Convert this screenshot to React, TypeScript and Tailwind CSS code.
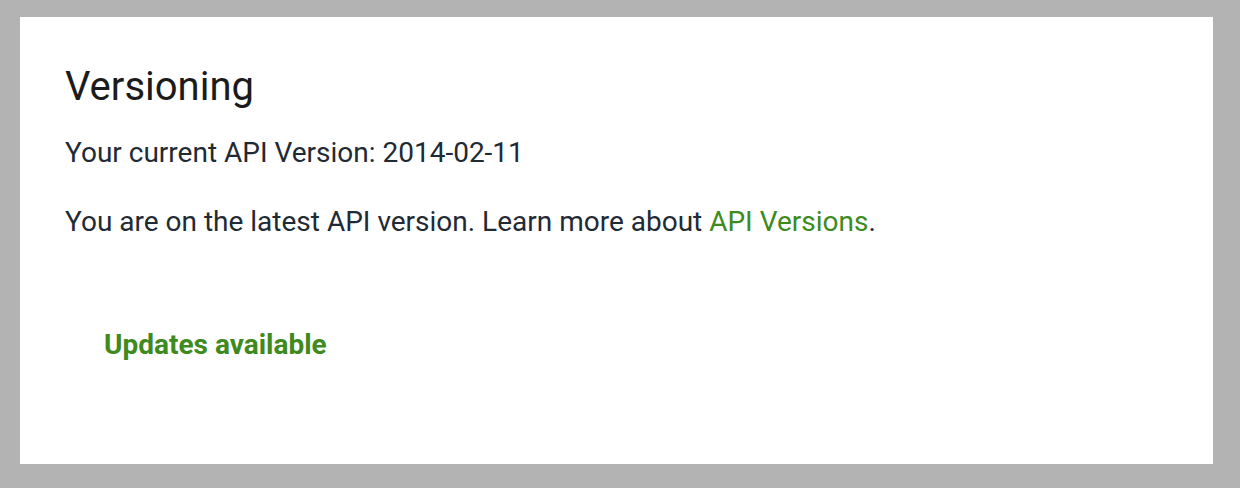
export default function App() {
  return (
    <div className="w-[1240px] h-[488px] bg-[#b3b3b3] pt-[17px] pl-[20px] flex flex-col" style={{ fontFamily: "Roboto, 'Liberation Sans', sans-serif" }}>
      <div className="w-[1193px] h-[447px] bg-white pl-[45px] pt-[46px] flex flex-col">
        <h1 className="text-[40px] leading-[48px] text-[#1b1b1b] font-normal">Versioning</h1>
        <p className="mt-[24px] text-[28px] leading-[36px] text-[#1f2a35]">Your current API Version: 2014-02-11</p>
        <p className="mt-[33px] text-[28px] leading-[36px] text-[#1f2a35]">
          You are on the latest API version. Learn more about{" "}
          <a className="text-[#3e8a1d]">API Versions</a>.
        </p>
        <div className="mt-[87px] pl-[39px] text-[28px] leading-[36px] font-bold text-[#3e8a1d]">Updates available</div>
      </div>
    </div>
  );
}
